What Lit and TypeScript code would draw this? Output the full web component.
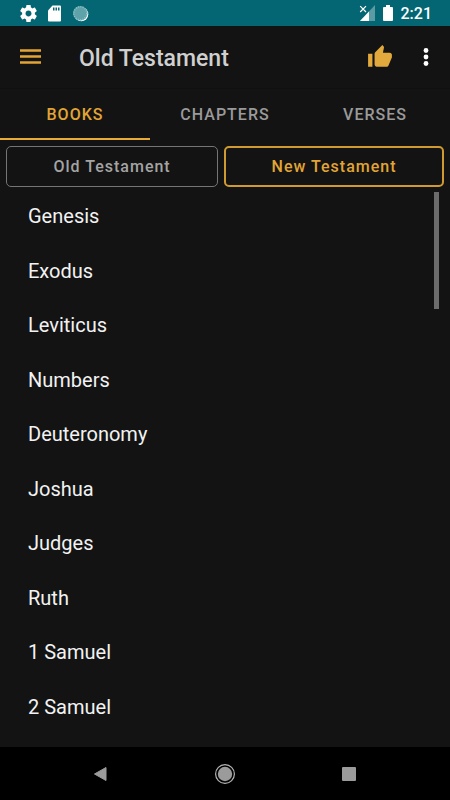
import { LitElement, html, css } from "lit";
import { customElement, state } from "lit/decorators.js";
import { classMap } from "lit/directives/class-map.js";

const BOOKS = [
  "Genesis",
  "Exodus",
  "Leviticus",
  "Numbers",
  "Deuteronomy",
  "Joshua",
  "Judges",
  "Ruth",
  "1 Samuel",
  "2 Samuel",
];

@customElement("status-bar")
class StatusBar extends LitElement {
  static styles = css`
    :host {
      display: flex;
      align-items: center;
      justify-content: space-between;
      height: 26px;
      padding: 0 18px 0 20px;
      background: #036672;
      color: #fff;
    }
    .group {
      display: flex;
      align-items: center;
    }
    .left {
      gap: 10px;
    }
    .right {
      gap: 8px;
    }
    svg {
      display: block;
    }
    .time {
      font-size: 16px;
      line-height: 26px;
      font-weight: 500;
      padding-top: 2px;
    }
  `;

  render() {
    return html`
      <div class="group left">
        <svg width="17" height="17" viewBox="2 2 20 20" fill="#fff">
          <path
            d="M19.43 12.98c.04-.32.07-.64.07-.98s-.03-.66-.07-.98l2.11-1.65c.19-.15.24-.42.12-.64l-2-3.46c-.12-.22-.39-.3-.61-.22l-2.49 1c-.52-.4-1.08-.73-1.69-.98l-.38-2.65C14.46 2.18 14.25 2 14 2h-4c-.25 0-.46.18-.49.42l-.38 2.65c-.61.25-1.17.59-1.69.98l-2.49-1c-.23-.09-.49 0-.61.22l-2 3.46c-.13.22-.07.49.12.64l2.11 1.65c-.04.32-.07.65-.07.98s.03.66.07.98l-2.11 1.65c-.19.15-.24.42-.12.64l2 3.46c.12.22.39.3.61.22l2.49-1c.52.4 1.08.73 1.69.98l.38 2.65c.03.24.24.42.49.42h4c.25 0 .46-.18.49-.42l.38-2.65c.61-.25 1.17-.59 1.69-.98l2.49 1c.23.09.49 0 .61-.22l2-3.46c.12-.22.07-.49-.12-.64l-2.11-1.65zM12 15.500c-1.930 0-3.500-1.570-3.500-3.500s1.570-3.500 3.500-3.500 3.500 1.570 3.500 3.500-1.570 3.500-3.500 3.500z"
          />
        </svg>
        <svg width="15" height="17" viewBox="0 0 15 17">
          <path
            d="M5.500.5H13a1 1 0 0 1 1 1v14a1 1 0 0 1-1 1H2a1 1 0 0 1-1-1V5.500z"
            fill="#fff"
          />
          <path d="M6 2.500h1.500v3H6zM8.500 2.500H10v3H8.500zM11 2.500h1.500v3H11z" fill="#036672" />
        </svg>
        <svg width="17" height="17" viewBox="0 0 17 17">
          <circle cx="9.300" cy="9.300" r="7" fill="#fff" />
          <circle cx="8.300" cy="8.300" r="7.200" fill="#5fa3aa" />
          <circle
            cx="8.300"
            cy="8.300"
            r="6.500"
            fill="none"
            stroke="#8fc0c5"
            stroke-width="1.500"
            stroke-dasharray="1 1.300"
          />
        </svg>
      </div>
      <div class="group right">
        <svg width="16" height="16" viewBox="0 0 16 16">
          <path d="M16 0v16H1z" fill="#5b9ba3" />
          <path d="M10 6.500V16H1z" fill="#fff" />
          <path d="M0 0h7v8H0z" fill="#036672" />
          <path d="M1.200 1.200l5.800 5.800M7 1.200L1.200 7" stroke="#fff" stroke-width="1.200" />
        </svg>
        <svg width="10" height="17" viewBox="0 0 10 17">
          <path
            d="M3 0h4v2h2a1 1 0 0 1 1 1v12a1 1 0 0 1-1 1H1a1 1 0 0 1-1-1V3a1 1 0 0 1 1-1h2z"
            fill="#fff"
          />
        </svg>
        <span class="time">2:21</span>
      </div>
    `;
  }
}

@customElement("nav-bar")
class NavBar extends LitElement {
  static styles = css`
    :host {
      display: grid;
      grid-template-columns: repeat(3, 124px);
      justify-content: center;
      height: 53px;
      background: #000;
    }
    button {
      display: flex;
      align-items: center;
      justify-content: center;
      margin: 0;
      padding: 0;
      border: 0;
      background: none;
    }
    svg {
      display: block;
    }
  `;

  render() {
    return html`
      <button aria-label="Back">
        <svg width="22" height="22" viewBox="0 0 22 22">
          <path d="M4.500 11L16 4.500v13z" fill="#9b9b9b" stroke="#9b9b9b" stroke-linejoin="round" />
        </svg>
      </button>
      <button aria-label="Home">
        <svg width="22" height="22" viewBox="0 0 22 22">
          <circle cx="11" cy="11" r="9.400" fill="none" stroke="#b4b4b4" stroke-width="1.200" />
          <circle cx="11" cy="11" r="7.200" fill="#9b9b9b" />
        </svg>
      </button>
      <button aria-label="Recent apps">
        <svg width="22" height="22" viewBox="0 0 22 22">
          <rect x="4" y="4" width="14" height="14" rx="1" fill="#9b9b9b" />
        </svg>
      </button>
    `;
  }
}

@customElement("app-root")
class AppRoot extends LitElement {
  @state() private tab = "BOOKS";

  static styles = css`
    :host {
      display: flex;
      flex-direction: column;
      min-height: 100vh;
      background: #131313;
      color: #f2f2f2;
      font-family: Roboto, "Liberation Sans", sans-serif;
    }
    button {
      margin: 0;
      padding: 0;
      border: 0;
      background: none;
      color: inherit;
      font: inherit;
      cursor: pointer;
    }
    svg {
      display: block;
    }
    .app-bar {
      display: flex;
      align-items: center;
      height: 62px;
      padding: 0 14px 0 18px;
      border-bottom: 1px solid #101010;
    }
    .title {
      flex: 1;
      margin: 0;
      padding: 4px 0 0 36px;
      font-size: 23px;
      line-height: 32px;
      font-weight: 500;
      color: #d0d0d0;
    }
    .actions {
      display: flex;
      align-items: center;
      gap: 23px;
    }
    .tabs {
      display: grid;
      grid-template-columns: repeat(3, 1fr);
      height: 51px;
    }
    .tab {
      padding-top: 2px;
      border-bottom: 2px solid transparent;
      font-size: 16px;
      font-weight: 500;
      letter-spacing: 1px;
      color: #9a9a9a;
    }
    .tab.active {
      border-color: #e9ab35;
      color: #e2a535;
    }
    .filters {
      display: flex;
      gap: 6px;
      padding: 6px 6px 0;
    }
    .filter {
      flex: 1 1 auto;
      height: 41px;
      padding: 0 1px;
      border: 1px solid #757575;
      border-radius: 5px;
      font-size: 16px;
      font-weight: 500;
      letter-spacing: 1px;
      color: #a4a4a4;
    }
    .filter.current {
      padding: 0;
      border: 2px solid #d09a32;
      color: #e2a535;
    }
    .scroller {
      position: relative;
      flex: 1;
      display: flex;
    }
    .books {
      flex: 1;
      display: flex;
      flex-direction: column;
      margin: 0;
      padding: 2px 0 13px;
      list-style: none;
    }
    .row {
      flex: 1;
      display: flex;
    }
    .book {
      flex: 1;
      min-height: 48px;
      padding: 0 28px;
      text-align: left;
      font-size: 20px;
      line-height: 28px;
    }
    .thumb {
      position: absolute;
      top: 5px;
      right: 11px;
      width: 5px;
      height: 117px;
      background: #6c6c6c;
    }
  `;

  render() {
    return html`
      <status-bar></status-bar>
      <header class="app-bar">
        <button aria-label="Menu">
          <svg width="25" height="24" viewBox="0 0 25 24">
            <path d="M2 5.500h21M2 11.500h21M2 17.500h21" stroke="#e2a535" stroke-width="2.400" />
          </svg>
        </button>
        <h1 class="title">Old Testament</h1>
        <div class="actions">
          <button aria-label="Like">
            <svg width="26" height="26" viewBox="0 0 24 24" fill="#e2a93c">
              <path
                d="M1 21h4V9H1v12zm22-11c0-1.100-.9-2-2-2h-6.310l.95-4.570.03-.32c0-.41-.17-.79-.44-1.060L14.170 1 7.590 7.590C7.220 7.950 7 8.450 7 9v10c0 1.100.9 2 2 2h9c.83 0 1.540-.5 1.840-1.220l3.020-7.050c.09-.23.140-.47.140-.73v-2z"
              />
            </svg>
          </button>
          <button aria-label="More options">
            <svg width="20" height="24" viewBox="0 0 20 24" fill="#fff">
              <circle cx="10" cy="5.500" r="2.400" />
              <circle cx="10" cy="12" r="2.400" />
              <circle cx="10" cy="18.500" r="2.400" />
            </svg>
          </button>
        </div>
      </header>
      <div class="tabs" role="tablist">
        ${["BOOKS", "CHAPTERS", "VERSES"].map(
          (name) => html`<button
            role="tab"
            aria-selected=${name === this.tab ? "true" : "false"}
            class=${classMap({ tab: true, active: name === this.tab })}
            @click=${() => (this.tab = name)}
          >${name}</button>`
        )}
      </div>
      <div class="filters">
        <button class="filter">Old Testament</button>
        <button class="filter current">New Testament</button>
      </div>
      <main class="scroller">
        <ul class="books">
          ${BOOKS.map(
            (book) => html`<li class="row"><button class="book">${book}</button></li>`
          )}
        </ul>
        <div class="thumb"></div>
      </main>
      <nav-bar></nav-bar>
    `;
  }
}
